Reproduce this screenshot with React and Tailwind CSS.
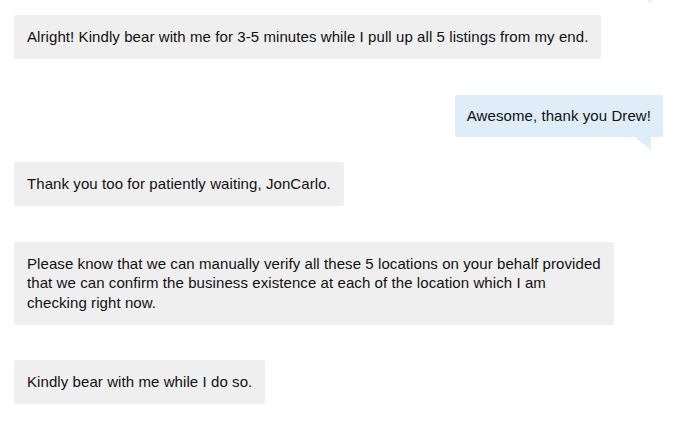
import React from 'react';

const messages = [
  { id: 1, from: 'agent', text: 'Alright! Kindly bear with me for 3-5 minutes while I pull up all 5 listings from my end.' },
  { id: 2, from: 'me', text: 'Awesome, thank you Drew!' },
  { id: 3, from: 'agent', text: 'Thank you too for patiently waiting, JonCarlo.' },
  {
    id: 4,
    from: 'agent',
    text: 'Please know that we can manually verify all these 5 locations on your behalf provided that we can confirm the business existence at each of the location which I am checking right now.',
  },
  { id: 5, from: 'agent', text: 'Kindly bear with me while I do so.' },
];

function Tail() {
  return (
    <svg width="16" height="13" viewBox="0 0 16 13" className="block">
      <polygon points="0,0 16,0 16,13" fill="#deedf8" />
    </svg>
  );
}

function Bubble({ msg }) {
  if (msg.from === 'me') {
    return (
      <div className="flex flex-col items-end mt-[36px] mb-[12px]">
        <div className="bg-[#deedf8] rounded-[2px] px-[12px] py-[11px] leading-[20px]">{msg.text}</div>
        <div className="mr-[12px]">
          <Tail />
        </div>
      </div>
    );
  }
  return (
    <div className="flex flex-col items-start">
      <div className="bg-[#efefef] rounded-[2px] px-[13px] py-[12.25px] leading-[19.5px] max-w-[600px]">{msg.text}</div>
    </div>
  );
}

export default function App() {
  return (
    <div
      className="w-[678px] h-[421px] overflow-hidden bg-white text-[15px] tracking-[0.08px] text-[#111] pl-[14px] pr-[15px]"
      style={{ fontFamily: '"Liberation Sans", Arial, sans-serif' }}
    >
      {/* tail of the previous (cut off) message */}
      <div className="flex justify-end h-[3px] overflow-hidden mr-[12px]">
        <div className="-mt-[10px]">
          <Tail />
        </div>
      </div>
      <div className="flex flex-col pt-[12px]">
        {messages.map((m, i) => {
          const prev = messages[i - 1];
          const gap = i > 0 && prev.from === 'agent' && m.from === 'agent' ? 'mt-[35.5px]' : '';
          return (
            <div key={m.id} className={gap}>
              <Bubble msg={m} />
            </div>
          );
        })}
      </div>
    </div>
  );
}
